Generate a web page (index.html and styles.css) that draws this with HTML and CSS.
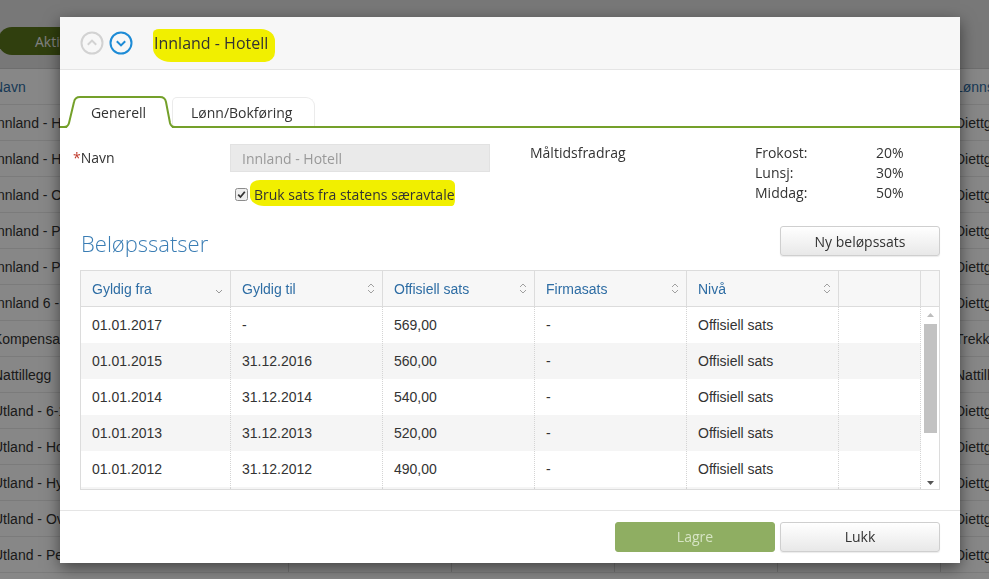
FILE: index.html
```html
<!DOCTYPE html>
<html lang="no">
<head>
<meta charset="utf-8">
<title>Innland - Hotell</title>
<link rel="stylesheet" href="styles.css">
</head>
<body>
<div class="page">
  <div class="topbar"><span class="btn-active">Aktive</span></div>
  <div class="bg-table">
    <div class="bg-row bg-head"><div>Navn</div><div></div><div></div><div></div><div></div><div>Lønnsart</div></div>
    <div class="bg-row"><div>Innland - Hotell</div><div></div><div></div><div></div><div></div><div>Diettgodtgjørelse</div></div>
    <div class="bg-row"><div>Innland - Hybel</div><div></div><div></div><div></div><div></div><div>Diettgodtgjørelse</div></div>
    <div class="bg-row"><div>Innland - Overnatting</div><div></div><div></div><div></div><div></div><div>Diettgodtgjørelse</div></div>
    <div class="bg-row"><div>Innland - Pensjonat</div><div></div><div></div><div></div><div></div><div>Diettgodtgjørelse</div></div>
    <div class="bg-row"><div>Innland - Privat</div><div></div><div></div><div></div><div></div><div>Diettgodtgjørelse</div></div>
    <div class="bg-row"><div>Innland 6 - 12 timer</div><div></div><div></div><div></div><div></div><div>Diettgodtgjørelse</div></div>
    <div class="bg-row"><div>Kompensasjon</div><div></div><div></div><div></div><div></div><div>Trekkpliktig</div></div>
    <div class="bg-row"><div>Nattillegg</div><div></div><div></div><div></div><div></div><div>Nattillegg</div></div>
    <div class="bg-row"><div>Utland - 6-12 timer</div><div></div><div></div><div></div><div></div><div>Diettgodtgjørelse</div></div>
    <div class="bg-row"><div>Utland - Hotell</div><div></div><div></div><div></div><div></div><div>Diettgodtgjørelse</div></div>
    <div class="bg-row"><div>Utland - Hybel</div><div></div><div></div><div></div><div></div><div>Diettgodtgjørelse</div></div>
    <div class="bg-row"><div>Utland - Overnatting</div><div></div><div></div><div></div><div></div><div>Diettgodtgjørelse</div></div>
    <div class="bg-row"><div>Utland - Pensjonat</div><div></div><div></div><div></div><div></div><div>Diettgodtgjørelse</div></div>
  </div>
</div>
<div class="overlay"></div>

<div class="modal">
  <div class="m-head">
    <span class="nav-btn">
      <svg width="24" height="24" viewBox="0 0 24 24"><circle cx="12" cy="12" r="10.5" fill="none" stroke="#d2d2d2" stroke-width="2"/><path d="M7.8 13.8 L12 9.6 L16.2 13.8" fill="none" stroke="#d2d2d2" stroke-width="2"/></svg>
    </span>
    <span class="nav-btn">
      <svg width="24" height="24" viewBox="0 0 24 24"><circle cx="12" cy="12" r="10.5" fill="none" stroke="#1d8bd6" stroke-width="2"/><path d="M7.8 10.2 L12 14.4 L16.2 10.2" fill="none" stroke="#1d8bd6" stroke-width="2"/></svg>
    </span>
    <h4 class="m-title"><span class="hl-title">Innland - Hotell</span></h4>
  </div>

  <div class="m-body">
    <div class="tabs">
      <div class="tab tab-active">
        <svg class="tab-shape" width="115" height="32" viewBox="0 0 115 32">
          <path d="M7 32 L14 6 Q15 1 20 1 H100 Q105 1 106 6 L112 32 Z" fill="#fff"/>
          <path d="M0 31 H4 Q8 31 9 27 L14 6 Q15 1 20 1 H100 Q105 1 106 6 L110 27 Q111 31 115 31" fill="none" stroke="#74a02a" stroke-width="2"/>
        </svg>
        <span class="tab-text">Generell</span>
      </div>
      <div class="tab tab-plain">Lønn/Bokføring</div>
    </div>

    <div class="form">
      <div class="form-left">
        <div class="frow">
          <span class="flabel"><span class="req">*</span>Navn</span>
          <span class="input">Innland - Hotell</span>
        </div>
        <div class="fcheck">
          <span class="cb"><svg width="13" height="13" viewBox="0 0 13 13"><rect x="0.5" y="0.5" width="12" height="12" rx="2" fill="#eeeeee" stroke="#8c8c8c"/><path d="M3.2 6.6 L5.5 9 L9.8 3.8" fill="none" stroke="#333" stroke-width="1.8"/></svg></span>
          <span class="hl-check">Bruk sats fra statens særavtale</span>
        </div>
      </div>
      <div class="meal-title">Måltidsfradrag</div>
      <div class="meals">
        <span>Frokost:</span><span>20%</span>
        <span>Lunsj:</span><span>30%</span>
        <span>Middag:</span><span>50%</span>
      </div>
    </div>

    <div class="section-head">
      <h3 class="section-title">Beløpssatser</h3>
      <button class="btn btn-new">Ny beløpssats</button>
    </div>

    <div class="grid">
      <div class="g-head">
        <div class="hc">Gyldig fra<svg class="sort-one" width="8" height="5" viewBox="0 0 8 5"><path d="M1 1 L4 4 L7 1" fill="none" stroke="#999" stroke-width="1"/></svg></div>
        <div class="hc">Gyldig til<svg width="8" height="11" viewBox="0 0 8 11"><path d="M1 4 L4 1 L7 4 M1 7 L4 10 L7 7" fill="none" stroke="#a0a0a0" stroke-width="1"/></svg></div>
        <div class="hc">Offisiell sats<svg width="8" height="11" viewBox="0 0 8 11"><path d="M1 4 L4 1 L7 4 M1 7 L4 10 L7 7" fill="none" stroke="#a0a0a0" stroke-width="1"/></svg></div>
        <div class="hc">Firmasats<svg width="8" height="11" viewBox="0 0 8 11"><path d="M1 4 L4 1 L7 4 M1 7 L4 10 L7 7" fill="none" stroke="#a0a0a0" stroke-width="1"/></svg></div>
        <div class="hc">Nivå<svg width="8" height="11" viewBox="0 0 8 11"><path d="M1 4 L4 1 L7 4 M1 7 L4 10 L7 7" fill="none" stroke="#a0a0a0" stroke-width="1"/></svg></div>
        <div class="hc"></div>
        <div class="hc hc-last"></div>
      </div>
      <div class="g-body">
        <div class="g-rows">
          <div class="gr"><div>01.01.2017</div><div>-</div><div>569,00</div><div>-</div><div>Offisiell sats</div><div></div></div>
          <div class="gr"><div>01.01.2015</div><div>31.12.2016</div><div>560,00</div><div>-</div><div>Offisiell sats</div><div></div></div>
          <div class="gr"><div>01.01.2014</div><div>31.12.2014</div><div>540,00</div><div>-</div><div>Offisiell sats</div><div></div></div>
          <div class="gr"><div>01.01.2013</div><div>31.12.2013</div><div>520,00</div><div>-</div><div>Offisiell sats</div><div></div></div>
          <div class="gr"><div>01.01.2012</div><div>31.12.2012</div><div>490,00</div><div>-</div><div>Offisiell sats</div><div></div></div>
          <div class="gr gr-tail"><div></div><div></div><div></div><div></div><div></div><div></div></div>
        </div>
        <div class="g-scroll">
          <svg width="7" height="4" viewBox="0 0 7 4"><path d="M0 4 L3.5 0 L7 4 Z" fill="#bdbdbd"/></svg>
          <span class="thumb"></span>
          <span class="spacer"></span>
          <svg width="7" height="4" viewBox="0 0 7 4"><path d="M0 0 L3.5 4 L7 0 Z" fill="#555"/></svg>
        </div>
      </div>
    </div>
  </div>

  <div class="m-foot">
    <button class="btn btn-save">Lagre</button>
    <button class="btn btn-close">Lukk</button>
  </div>
</div>
</body>
</html>
```
FILE: styles.css
```css
* { box-sizing: border-box; }

body {
  margin: 0;
  width: 989px;
  height: 579px;
  overflow: hidden;
  position: relative;
  background: #fff;
  color: #333;
  font-family: "Liberation Sans", Arial, sans-serif;
  font-size: 14px;
}

/* ---------- background page ---------- */
.page {
  height: 579px;
  overflow: hidden;
}
.topbar {
  height: 69px;
  background: #e2e2e2;
  border-bottom: 1px solid #d0d0d0;
  padding-top: 27px;
}
.btn-active {
  display: inline-flex;
  align-items: center;
  height: 28px;
  width: 120px;
  margin-left: -2px;
  padding-left: 37px;
  border-radius: 14px;
  background: #5b781b;
  color: #f2f2f2;
  font-family: "Open Sans", sans-serif;
  font-size: 14px;
}
.bg-table {
  margin-left: -21px;
  width: 1040px;
}
.bg-row {
  display: grid;
  grid-template-columns: 310px 163px 163px 163px 163px 1fr;
  height: 36px;
  border-bottom: 1px solid #e8e8e8;
}
.bg-row > div {
  padding-left: 14px;
  line-height: 37px;
  border-right: 1px solid #dcdcdc;
  white-space: nowrap;
  overflow: hidden;
  color: #333;
}
.bg-head > div { color: #2f6ca3; }

.overlay {
  position: fixed;
  inset: 0;
  background: rgba(0, 0, 0, 0.47);
}

/* ---------- modal ---------- */
.modal {
  position: absolute;
  left: 60px;
  top: 17px;
  width: 900px;
  height: 546px;
  background: #fff;
  box-shadow: 0 5px 15px rgba(0, 0, 0, 0.5);
  display: flex;
  flex-direction: column;
  font-family: "Open Sans", sans-serif;
}

.m-head {
  height: 53px;
  flex: none;
  background: #f7f7f7;
  border-bottom: 1px solid #e5e5e5;
  display: flex;
  align-items: center;
  padding-left: 20px;
}
.nav-btn {
  display: flex;
  width: 24px;
  height: 24px;
  margin-right: 5px;
}
.m-title {
  margin: 0 0 0 16px;
  font-weight: 400;
  font-size: 16px;
  color: #333;
  display: flex;
}
.hl-title {
  line-height: 22px;
  background: #f1ef00;
  padding: 3px 7px 8px 1px;
  margin: -3px -7px -8px -1px;
  border-radius: 6px 14px 10px 18px / 4px 12px 10px 14px;
}

.m-body {
  flex: 1;
  padding: 0 20px;
}

/* tabs */
.tabs {
  display: flex;
  align-items: flex-end;
  height: 32px;
  margin: 26px -20px 0;
  border-bottom: 2px solid #74a02a;
}
.tab {
  font-size: 14px;
  color: #333;
}
.tab-active {
  position: relative;
  width: 115px;
  height: 32px;
  margin-bottom: -2px;
  display: flex;
  align-items: center;
  justify-content: center;
  padding-left: 2px;
}
.tab-shape {
  position: absolute;
  left: 0;
  top: 0;
}
.tab-text { position: relative; }
.tab-plain {
  width: 143px;
  height: 29px;
  margin-left: -3px;
  padding-left: 18px;
  display: flex;
  align-items: center;
  background: #fff;
  border: 1px solid #ebebeb;
  border-bottom: none;
  border-radius: 5px 9px 0 0;
}

/* form */
.form {
  display: flex;
  margin: 16px 0 0 -7px;
  font-size: 14px;
  color: #333;
}
.form-left { width: 417px; }
.frow {
  display: flex;
  align-items: center;
  height: 28px;
}
.flabel {
  width: 157px;
  line-height: 28px;
}
.req { color: #c0392b; }
.input {
  width: 260px;
  height: 28px;
  line-height: 28px;
  padding-left: 11px;
  background: #eaeaea;
  border: 1px solid #e2e2e2;
  color: #999;
}
.fcheck {
  display: flex;
  align-items: center;
  height: 20px;
  margin-top: 12px;
  padding-left: 162px;
}
.cb {
  display: flex;
  width: 13px;
  height: 13px;
  margin-right: 6px;
}
.hl-check {
  line-height: 19px;
  background: #f1ef00;
  padding: 5px 0 2px 4px;
  margin: -5px 0 -2px -4px;
  border-radius: 10px 6px 3px 14px / 7px 5px 6px 10px;
}
.meal-title {
  width: 225px;
  margin-left: 40px;
  line-height: 20px;
  margin-top: -1px;
}
.meals {
  display: grid;
  grid-template-columns: 121px auto;
  line-height: 20px;
  margin-top: -1px;
  align-content: start;
}

/* section head */
.section-head {
  display: flex;
  justify-content: space-between;
  align-items: center;
  height: 30px;
  margin-top: 22px;
}
.section-title {
  margin: 3px 0 0 1px;
  font-size: 22px;
  font-weight: 300;
  color: #3a7db4;
}

.btn {
  font-family: "Open Sans", sans-serif;
  font-size: 14px;
  width: 160px;
  height: 30px;
  border-radius: 3px;
  border: 1px solid #cfcfcf;
  background: linear-gradient(#ffffff, #e8e8e8);
  color: #333;
  box-shadow: 0 1px 1px rgba(0, 0, 0, 0.08);
  padding: 0;
}

/* grid */
.grid {
  margin-top: 14px;
  width: 860px;
  border: 1px solid #dcdcdc;
  font-family: "Liberation Sans", Arial, sans-serif;
  font-size: 14px;
}
.g-head {
  display: grid;
  grid-template-columns: 150px 152px 152px 152px 152px 82px 18px;
  height: 36px;
  background: #f7f7f7;
  border-bottom: 1px solid #dcdcdc;
}
.hc {
  display: flex;
  align-items: center;
  justify-content: space-between;
  padding: 0 7px 0 11px;
  border-right: 1px solid #dcdcdc;
  color: #2e6da4;
}
.hc-last { border-right: none; }
.sort-one { margin-top: 6px; }

.g-body {
  display: flex;
  height: 182px;
  overflow: hidden;
}
.g-rows { width: 840px; }
.gr {
  display: grid;
  grid-template-columns: 150px 152px 152px 152px 152px 82px;
  height: 36px;
  background: #fff;
}
.gr:nth-child(even) { background: #f5f5f5; }
.gr-tail { background: #fff; }
.gr > div {
  line-height: 37px;
  padding-left: 11px;
  border-right: 1px dotted #d4d4d4;
  color: #333;
  white-space: nowrap;
}
.g-scroll {
  width: 18px;
  display: flex;
  flex-direction: column;
  align-items: center;
  padding: 6px 0 4px;
  background: #fff;
}
.thumb {
  width: 13px;
  height: 109px;
  margin-top: 7px;
  background: #c2c2c2;
}
.spacer { flex: 1; }

/* footer */
.m-foot {
  flex: none;
  height: 53px;
  border-top: 1px solid #e5e5e5;
  display: flex;
  justify-content: flex-end;
  align-items: center;
  gap: 5px;
  padding: 0 20px 1px;
}
.btn-save {
  background: #8fae62;
  border-color: #8fae62;
  color: #d6e4c4;
  box-shadow: none;
}
```
